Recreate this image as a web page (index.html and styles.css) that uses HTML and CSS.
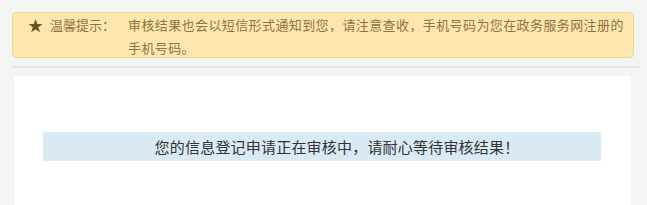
FILE: index.html
```html
<!DOCTYPE html>
<html lang="zh-CN">
<head>
    <meta charset="UTF-8">
    <meta name="viewport" content="width=device-width, initial-scale=1.0">
    <title>信息登记审核</title>
    <link rel="stylesheet" href="styles.css">
</head>
<body>
    <div class="page">
        <div class="tip-box">
            <span class="tip-star">★</span>
            <span class="tip-label">温馨提示：</span>
            <span class="tip-text">审核结果也会以短信形式通知到您，请注意查收，手机号码为您在政务服务网注册的手机号码。</span>
        </div>
        <div class="divider"></div>
        <div class="panel">
            <div class="status-bar">您的信息登记申请正在审核中，请耐心等待审核结果！</div>
        </div>
    </div>
</body>
</html>
```

FILE: styles.css
```css
body {
    margin: 0;
    background-color: #f3f4f4;
    font-family: "Noto Sans CJK SC", "Noto Sans", sans-serif;
}
.page {
    padding: 12px 13px 0 12px;
}
.tip-box {
    display: flex;
    align-items: flex-start;
    background-color: #fde7ae;
    border: 1px solid #f3d594;
    border-radius: 4px;
    padding: 0 6px 0 15px;
    height: 44px;
    font-size: 13px;
    line-height: 23px;
    color: #8d7443;
}
.tip-star {
    width: 22px;
    font-size: 15px;
    color: #6b5424;
}
.tip-label {
    width: 78px;
    flex-shrink: 0;
}
.tip-text {
    flex: 1;
    letter-spacing: 0.4px;
}
.divider {
    margin: 8px -5px 0 0;
    border-top: 2px solid #e4e5e5;
}
.panel {
    background-color: white;
    margin: 8px 3px 0 2px;
    padding: 56px 30px 60px 29px;
}
.status-bar {
    background-color: #d9eaf4;
    height: 29px;
    line-height: 29px;
    text-align: center;
    font-size: 15px;
    letter-spacing: 0.2px;
    color: #333;
    padding-left: 30px;
}
```
